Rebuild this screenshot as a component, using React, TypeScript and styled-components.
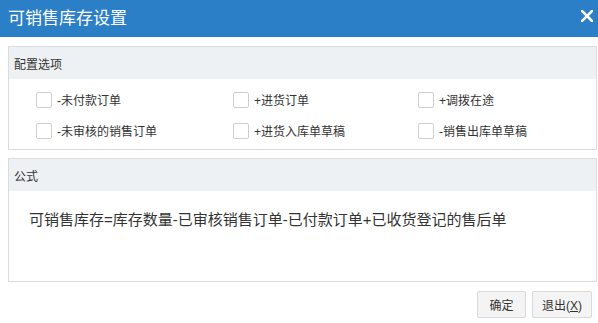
import React from "react";
import styled, { createGlobalStyle } from "styled-components";

const GlobalStyle = createGlobalStyle`
  html, body {
    margin: 0;
    padding: 0;
    background: #ffffff;
  }
  body {
    font-family: "Liberation Sans", "Noto Sans CJK SC", sans-serif;
    color: #333;
  }
`;

const Dialog = styled.div`
  width: 598px;
  height: 323px;
  display: flex;
  flex-direction: column;
  background: #fff;
  overflow: hidden;
`;

const TitleBar = styled.div`
  height: 37px;
  flex: none;
  background: #2a7fc6;
  display: flex;
  align-items: center;
  justify-content: space-between;
  padding: 0 5px 5px 8px;
  box-sizing: border-box;
`;

const Title = styled.h1`
  margin: 0;
  font-size: 17px;
  font-weight: normal;
  color: #fff;
  letter-spacing: 0;
`;

const CloseBtn = styled.button`
  border: none;
  background: transparent;
  padding: 0;
  width: 12px;
  height: 12px;
  margin-right: 0;
  display: flex;
  cursor: pointer;
`;

const Body = styled.div`
  padding: 9px 1px 0 8px;
  display: flex;
  flex-direction: column;
  gap: 8px;
`;

const Panel = styled.section`
  border: 1px solid #dcdcdc;
  display: flex;
  flex-direction: column;
`;

const PanelHead = styled.div`
  height: 32px;
  background: #eef1f4;
  padding-left: 5px;
  display: flex;
  align-items: center;
  font-size: 12px;
  color: #333;
`;

const OptionGrid = styled.div`
  display: grid;
  grid-template-columns: 197px 185px 1fr;
  grid-auto-rows: 31px;
  padding: 5px 0 3px 27px;
`;

const Option = styled.label`
  display: flex;
  align-items: center;
  font-size: 12px;
  color: #333;
  cursor: pointer;
`;

const Box = styled.span`
  width: 16px;
  height: 16px;
  box-sizing: border-box;
  border: 1px solid #cfcfcf;
  border-radius: 2px;
  background: #fff;
  margin-right: 5px;
  flex: none;
`;

const Formula = styled.div`
  min-height: 90px;
  box-sizing: border-box;
  padding: 18px 0 0 20px;
  font-size: 15px;
  line-height: 22px;
  color: #333;
`;

const Footer = styled.div`
  display: flex;
  justify-content: flex-end;
  gap: 6px;
  padding: 9px 6px 0 0;
`;

const Button = styled.button<{ $w: number }>`
  width: ${(p) => p.$w}px;
  height: 27px;
  border: 1px solid #d9d9d9;
  border-radius: 2px;
  background: #f4f4f4;
  font-family: inherit;
  font-size: 12px;
  color: #333;
  padding: 0;
  cursor: pointer;
`;

const options = [
  "-未付款订单",
  "+进货订单",
  "+调拨在途",
  "-未审核的销售订单",
  "+进货入库单草稿",
  "-销售出库单草稿",
];

const App: React.FC = () => {
  return (
    <>
      <GlobalStyle />
      <Dialog>
        <TitleBar>
          <Title>可销售库存设置</Title>
          <CloseBtn aria-label="关闭">
            <svg width="12" height="12" viewBox="0 0 12 12">
              <path d="M1 1L11 11M11 1L1 11" stroke="#fff" strokeWidth="2.6" strokeLinecap="square" />
            </svg>
          </CloseBtn>
        </TitleBar>
        <Body>
          <Panel>
            <PanelHead>配置选项</PanelHead>
            <OptionGrid>
              {options.map((o) => (
                <Option key={o}>
                  <Box />
                  {o}
                </Option>
              ))}
            </OptionGrid>
          </Panel>
          <Panel>
            <PanelHead>公式</PanelHead>
            <Formula>可销售库存=库存数量-已审核销售订单-已付款订单+已收货登记的售后单</Formula>
          </Panel>
        </Body>
        <Footer>
          <Button $w={49}>确定</Button>
          <Button $w={60}>
            退出(<u>X</u>)
          </Button>
        </Footer>
      </Dialog>
    </>
  );
};

export default App;
